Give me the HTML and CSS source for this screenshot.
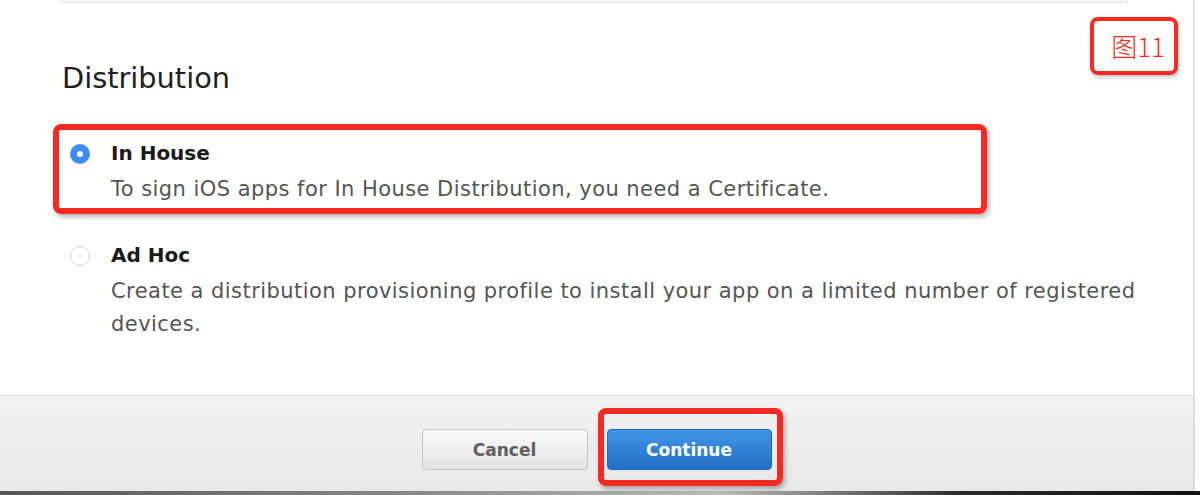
FILE: index.html
```html
<!DOCTYPE html>
<html>
<head>
<meta charset="utf-8">
<link rel="stylesheet" href="styles.css">
</head>
<body>
<div class="page">
  <div class="panel">
    <div class="topbox"></div>
    <div class="content">
      <h2 class="heading">Distribution</h2>
      <div class="option">
        <span class="radio radio-on"></span>
        <div class="option-text">
          <div class="option-title">In House</div>
          <div class="option-desc">To sign iOS apps for In House Distribution, you need a Certificate.</div>
        </div>
      </div>
      <div class="option option-second">
        <span class="radio"></span>
        <div class="option-text">
          <div class="option-title">Ad Hoc</div>
          <div class="option-desc">Create a distribution provisioning profile to install your app on a limited number of registered devices.</div>
        </div>
      </div>
    </div>
    <div class="footer">
      <button class="btn btn-cancel">Cancel</button>
      <button class="btn btn-continue">Continue</button>
    </div>
  </div>
  <div class="bottomstrip"></div>

  <div class="mark mark-inhouse"></div>
  <div class="mark mark-continue"></div>
  <div class="mark mark-label">图11</div>
</div>
</body>
</html>
```

FILE: styles.css
```css
html, body {
  margin: 0;
  padding: 0;
  background: #fff;
}
.page {
  position: relative;
  width: 1200px;
  height: 495px;
  overflow: hidden;
  display: flex;
  flex-direction: column;
  font-family: "DejaVu Sans", "Open Sans", sans-serif;
}
.panel {
  width: 1195px;
  height: 491px;
  border-right: 2px solid #dcdcdc;
  box-sizing: border-box;
  display: flex;
  flex-direction: column;
}
.topbox {
  flex: none;
  margin-left: 60px;
  width: 1068px;
  height: 3px;
  border: 1px solid #e3e3e3;
  border-top: none;
  border-radius: 0 0 5px 5px;
  background: #f7f7f7;
  box-sizing: border-box;
}
.content {
  flex: 1;
  padding-left: 62px;
}
.heading {
  margin: 55px 0 0 0;
  font-size: 28.8px;
  font-weight: 400;
  line-height: 40px;
  color: #1e1e1e;
}
.option {
  display: flex;
  align-items: flex-start;
  margin-top: 40px;
  margin-left: 8px;
}
.option-second {
  margin-top: 34px;
}
.radio {
  flex: none;
  width: 20px;
  height: 20px;
  border-radius: 50%;
  box-sizing: border-box;
  border: 1.5px solid #d6d6d6;
  background: #fff;
  margin-top: 6px;
  margin-right: 21px;
  position: relative;
}
.radio-on {
  border: none;
  background: #3d8ef0;
}
.radio-on::after {
  content: "";
  position: absolute;
  left: 7px;
  top: 7px;
  width: 6px;
  height: 6px;
  border-radius: 50%;
  background: #fff;
}
.option-text {
  width: 1040px;
}
.option-title {
  font-size: 20px;
  font-weight: 700;
  line-height: 31px;
  color: #1a1a1a;
}
.option-desc {
  margin-top: 4px;
  font-size: 21px;
  letter-spacing: 0.45px;
  line-height: 33px;
  color: #555;
}
.footer {
  flex: none;
  height: 96px;
  border-top: 1px solid #e2e2e2;
  background: linear-gradient(#f2f2f2, #e8e8e8);
  box-sizing: border-box;
  display: flex;
  justify-content: center;
  align-items: flex-start;
  gap: 19px;
  padding-top: 33px;
}
.btn {
  width: 166px;
  height: 41px;
  border-radius: 4px;
  font-family: "DejaVu Sans", "Open Sans", sans-serif;
  font-size: 17px;
  font-weight: 700;
  cursor: pointer;
}
.btn-cancel {
  color: #606060;
  border: 1px solid #c6c6c6;
  background: linear-gradient(#fbfbfb, #e2e2e2);
}
.btn-continue {
  width: 165px;
  color: #fff;
  border: 1px solid #1f68bb;
  background: linear-gradient(#4196e6, #226fc7);
}
.bottomstrip {
  height: 4px;
  background: linear-gradient(90deg, #555 0%, #8a8a8a 35%, #bdbdbd 60%, #2b2b2b 80%, #111 100%);
}
.mark {
  position: absolute;
  box-sizing: border-box;
  border: 6px solid #f52a23;
  border-radius: 8px;
  box-shadow: 2px 3px 5px rgba(0, 0, 0, 0.3);
}
.mark-inhouse {
  left: 53px;
  top: 124px;
  width: 934px;
  height: 90px;
}
.mark-continue {
  left: 598px;
  top: 408px;
  width: 185px;
  height: 78px;
}
.mark-label {
  left: 1090px;
  top: 17px;
  width: 88px;
  height: 58px;
  border-width: 4px;
  color: #f52a23;
  font-family: "Noto Sans CJK SC", "Liberation Sans", sans-serif;
  font-weight: 300;
  font-size: 26px;
  line-height: 50px;
  text-align: right;
  padding-right: 9px;
  box-shadow: 1px 2px 4px rgba(0, 0, 0, 0.25);
}
```
